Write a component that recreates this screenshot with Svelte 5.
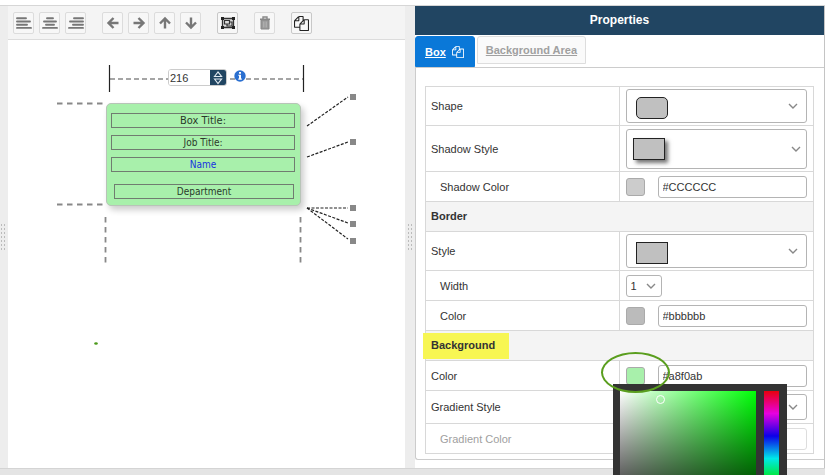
<script>
  const alignTools = [
    { label: 'Align left', d: 'M2 4.3h9M2 7.5h13M2 10.7h10M2 13.9h14' },
    { label: 'Align center', d: 'M6 4.3h6M3 7.5h12M5 10.7h8M2 13.9h14' },
    { label: 'Align right', d: 'M7 4.3h9M3 7.5h13M6 10.7h10M2 13.9h14' }
  ]

  const moveTools = [
    { label: 'Move left', turn: 0 },
    { label: 'Move right', turn: 180 },
    { label: 'Move up', turn: 90 },
    { label: 'Move down', turn: 270 }
  ]

  const fields = [
    { text: 'Box Title:', kind: 'title' },
    { text: 'Job Title:', kind: '' },
    { text: 'Name', kind: 'name' },
    { text: 'Department', kind: 'department' }
  ]

  // Connector lines from the box edge to their handles.
  const connectors = [
    { from: [299, 86], to: [340, 57], dot: 57 },
    { from: [299, 117], to: [340, 102], dot: 102 },
    { from: [299, 168], to: [340, 168], dot: 168 },
    { from: [299, 168], to: [340, 183], dot: 184 },
    { from: [299, 168], to: [340, 199], dot: 201 }
  ]

  let boxWidth = $state('216')
  let tab = $state('box')
  let shadowColor = $state('#CCCCCC')
  let borderColor = $state('#bbbbbb')
  let backgroundColor = $state('#a8f0ab')
  let gradientColor = $state('')
</script>

{#snippet copyIcon()}
  <path fill="currentColor" d="M1696 384q40 0 68 28t28 68v1216q0 40-28 68t-68 28h-960q-40 0-68-28t-28-68v-288h-544q-40 0-68-28t-28-68v-672q0-40 20-88t48-76l408-408q28-28 76-48t88-20h416q40 0 68 28t28 68v328q68-40 128-40h416zm-544 213l-299 299h299v-299zm-640-384l-299 299h299v-299zm196 647l316-316v-416h-384v416q0 40-28 68t-68 28h-416v640h512v-256q0-40 20-88t48-76zm956 804v-1152h-384v416q0 40-28 68t-68 28h-416v640h896z" />
{/snippet}

{#snippet chevron()}
  <svg class="chevron" viewBox="0 0 10 6" aria-hidden="true">
    <path d="M1 1 L5 5 L9 1" fill="none" stroke="#888" stroke-width="1.4" />
  </svg>
{/snippet}

{#snippet colorField(id, value, setValue, disabled)}
  <div class="color-field">
    {#if !disabled}
      <button class="swatch" style="background-color: {value}" aria-label="Pick color"></button>
    {:else}
      <button class="swatch" disabled aria-label="Pick color"></button>
    {/if}
    <input {id} type="text" {value} {disabled} oninput={(e) => setValue(e.target.value)} />
  </div>
{/snippet}

<div class="page">
  <main>
    <div class="splitter left"><span class="grip"></span></div>

    <section class="editor">
      <div class="toolbar">
        <div class="group">
          {#each alignTools as tool}
            <button aria-label={tool.label}>
              <svg viewBox="0 0 18 18"><path d={tool.d} stroke="#777" stroke-width="1.9" stroke-linecap="round" /></svg>
            </button>
          {/each}
        </div>
        <div class="group">
          {#each moveTools as tool}
            <button aria-label={tool.label}>
              <svg viewBox="0 0 18 18">
                <path d="M9.5 4 L4.5 9 L9.5 14 M5 9 H14.5" transform="rotate({tool.turn} 9 9)" fill="none" stroke="#777" stroke-width="2.4" />
              </svg>
            </button>
          {/each}
        </div>
        <button class="active" aria-label="Group">
          <svg viewBox="0 0 18 18">
            <path d="M3.5 4.5h11v9h-11z" fill="#ddd" stroke="#333" stroke-width="1.3" />
            <path d="M2 3h3v3h-3zM13 3h3v3h-3zM2 12h3v3h-3zM13 12h3v3h-3z" fill="#222" />
            <path d="M5.5 6.5h5v3.5h-5zM8 10v2h5v-4h-2.5" fill="none" stroke="#333" stroke-width="1.2" />
          </svg>
        </button>
        <button class="dim" aria-label="Delete">
          <svg viewBox="0 0 18 18">
            <path d="M7 4.5V3h4v1.5M4 5.2h10" fill="none" stroke="#888" stroke-width="1.4" />
            <path d="M5 6h8v9h-8z" fill="#999" stroke="#888" stroke-width="1" />
            <path d="M7.5 7.5v6M9 7.5v6M10.5 7.5v6" stroke="#bbb" stroke-width=".6" />
          </svg>
        </button>
        <button class="active copy" aria-label="Copy style">
          <svg viewBox="0 0 1792 1792">{@render copyIcon()}</svg>
        </button>
      </div>

      <div class="canvas">
        <svg class="guides" width="397" height="320" aria-hidden="true">
          <g stroke="#888" stroke-width="1.5" fill="none">
            <path d="M102 39H295" stroke-dasharray="5 3" />
            <path d="M49 63.5H95M49 164.5H95M97.5 177V223M292.5 177V223" stroke-dasharray="5.5 4.5" stroke-width="1.8" />
          </g>
          <path d="M101.5 25V52M295.5 25V52" stroke="#222" stroke-width="1.2" />
          {#each connectors as line}
            <path d="M{line.from[0]} {line.from[1]}L{line.to[0]} {line.to[1]}" stroke="#222" stroke-width="1.2" stroke-dasharray="3 1.5" />
            <rect x="342" y={line.dot - 3} width="6" height="6" fill="#888" />
          {/each}
          <ellipse cx="88" cy="303.5" rx="1.8" ry="1.2" fill="#4c9a1c" />
        </svg>

        <div class="width-input">
          <input type="text" aria-label="Box width" bind:value={boxWidth} />
          <button aria-label="Change width">
            <svg viewBox="0 0 16 15">
              <path d="M4.5 6.5 L8 2 L11.5 6.500zM4.500 9 L8 13.500 L11.500 9z" fill="none" stroke="#dfe8ef" stroke-width="1.2" />
            </svg>
          </button>
        </div>
        <svg class="info" viewBox="0 0 12 12" aria-hidden="true">
          <circle cx="6" cy="6" r="5.7" fill="#2a6fd0" />
          <path d="M5 2h2v1.7h-2zM4.3 4.7H7V8.5h.8V9.7H4.3V8.5H5V5.8h-.7z" fill="#fff" />
        </svg>

        <div class="chart-box">
          {#each fields as field}
            <div class="field {field.kind}">{field.text}</div>
          {/each}
        </div>
      </div>
    </section>

    <div class="splitter"><span class="grip"></span></div>

    <aside class="properties">
      <h2>Properties</h2>
      <nav class="tabs">
        <a href="#box" class:selected={tab === 'box'} onclick={() => (tab = 'box')}>
          <span>Box</span>
          <svg viewBox="0 0 1792 1792" aria-hidden="true">{@render copyIcon()}</svg>
        </a>
        <a href="#area" class:selected={tab === 'area'} onclick={() => (tab = 'area')}><span>Background Area</span></a>
      </nav>

      <div class="panel">
        <form class="rows">
          <div class="row tall">
            <label for="shape">Shape</label>
            <div class="cell">
              <div class="select">
                <select id="shape"><option value="rounded" aria-label="Rounded"></option></select>
                <span class="preview rounded"></span>
                {@render chevron()}
              </div>
            </div>
          </div>
          <div class="row taller">
            <label for="shadow">Shadow Style</label>
            <div class="cell">
              <div class="select shadow">
                <select id="shadow"><option value="soft" aria-label="Soft"></option></select>
                <span class="preview shadowed"></span>
                {@render chevron()}
              </div>
            </div>
          </div>
          <div class="row">
            <label class="sub" for="shadow-color">Shadow Color</label>
            <div class="cell">{@render colorField('shadow-color', shadowColor, (v) => (shadowColor = v), false)}</div>
          </div>

          <h3>Border</h3>
          <div class="row tall">
            <label for="style">Style</label>
            <div class="cell">
              <div class="select">
                <select id="style"><option value="solid" aria-label="Solid"></option></select>
                <span class="preview"></span>
                {@render chevron()}
              </div>
            </div>
          </div>
          <div class="row">
            <label class="sub" for="width">Width</label>
            <div class="cell">
              <div class="select small">
                <select id="width"><option>1</option><option>2</option><option>3</option></select>
                {@render chevron()}
              </div>
            </div>
          </div>
          <div class="row">
            <label class="sub" for="border-color">Color</label>
            <div class="cell">{@render colorField('border-color', borderColor, (v) => (borderColor = v), false)}</div>
          </div>

          <h3><mark>Background</mark></h3>
          <div class="row">
            <label for="background-color">Color</label>
            <div class="cell">
              {@render colorField('background-color', backgroundColor, (v) => (backgroundColor = v), false)}
              <div class="picker">
                <div class="shades"><span class="cursor"></span></div>
                <div class="hues"></div>
              </div>
              <span class="callout"></span>
            </div>
          </div>
          <div class="row gradient">
            <label for="gradient">Gradient Style</label>
            <div class="cell">
              <div class="select medium">
                <select id="gradient"><option value="none" aria-label="None"></option></select>
                {@render chevron()}
              </div>
            </div>
          </div>
          <div class="row disabled">
            <label class="sub" for="gradient-color">Gradient Color</label>
            <div class="cell">{@render colorField('gradient-color', gradientColor, (v) => (gradientColor = v), true)}</div>
          </div>
        </form>
      </div>
    </aside>
  </main>
  <footer></footer>
</div>

<style>
  :global(body) {
    margin: 0;
    background: #fff;
  }
  .page {
    display: flex;
    flex-direction: column;
    box-sizing: border-box;
    min-height: 100vh;
    padding-top: 5px;
    overflow: hidden;
    font-family: "Liberation Sans", Arial, sans-serif;
    font-size: 11px;
    color: #333;
  }
  .page * {
    box-sizing: border-box;
  }
  button, input, select {
    margin: 0;
    padding: 0;
    font: inherit;
    color: inherit;
  }
  main {
    flex: 1;
    display: grid;
    grid-template-columns: 8px minmax(0, 397fr) 10px minmax(0, 410fr);
    border-top: 1px solid #d6d6d6;
  }
  footer {
    height: 7px;
    border-top: 1px solid #d4d4d4;
    background: #e4e4e4;
  }

  .splitter {
    display: flex;
    align-items: center;
    justify-content: center;
    background: #ededed;
  }
  .splitter.left {
    justify-content: flex-start;
  }
  .grip {
    width: 6px;
    height: 28px;
    background: radial-gradient(circle, #bbb 1px, transparent 1px) 0 0 / 3px 4px;
  }

  .editor {
    display: flex;
    flex-direction: column;
  }
  .toolbar {
    display: flex;
    gap: 16px;
    padding: 6px 5px 5px;
    border-bottom: 1px solid #dcdcdc;
    background: #f4f4f4;
  }
  .group {
    display: flex;
    gap: 5px;
  }
  .toolbar button {
    display: flex;
    align-items: center;
    justify-content: center;
    width: 21px;
    height: 22px;
    border: 1px solid #dcdcdc;
    border-radius: 2px;
    background: #f7f7f7;
  }
  .toolbar button.active {
    border-color: #c8c8c8;
    color: #222;
  }
  .toolbar svg {
    flex: none;
    width: 18px;
    height: 18px;
  }
  .toolbar .copy svg {
    width: 15px;
    height: 15px;
  }

  .canvas {
    position: relative;
    flex: 1;
  }
  .guides {
    display: block;
  }
  .width-input {
    position: absolute;
    left: 160px;
    top: 29px;
    display: flex;
    width: 59px;
    height: 17px;
    border: 1px solid #ccc;
    border-radius: 3px;
    background: #fff;
    overflow: hidden;
  }
  .width-input input {
    flex: 1;
    min-width: 0;
    padding-left: 1px;
    border: 0;
  }
  .width-input button {
    display: flex;
    width: 16px;
    border: 0;
    background: #214562;
  }
  .width-input svg {
    width: 16px;
    height: 15px;
  }
  .info {
    position: absolute;
    left: 226px;
    top: 30px;
    width: 12px;
    height: 12px;
  }
  .chart-box {
    position: absolute;
    left: 98px;
    top: 63px;
    display: flex;
    flex-direction: column;
    gap: 7px;
    width: 195px;
    height: 103px;
    padding: 9px 5px 0 4px;
    border: 1px solid #b8c4b8;
    border-radius: 5px;
    background: #a8f0ab;
    box-shadow: 3px 4px 6px rgba(0, 0, 0, 0.2);
    font-family: "DejaVu Sans Condensed", "DejaVu Sans", sans-serif;
    font-size: 10px;
    color: #2a3a2a;
  }
  .field {
    height: 15px;
    border: 1px solid #707c70;
    line-height: 14px;
    text-align: center;
  }
  .field.title {
    font-size: 11px;
  }
  .field.name {
    color: #1432e0;
  }
  .field.department {
    margin: 5px 1px 0 3px;
  }

  .properties {
    display: flex;
    flex-direction: column;
    padding-bottom: 8px;
    border-right: 1px solid #c4c4c4;
  }
  h2 {
    margin: 0;
    background: #214562;
    color: #fff;
    font-size: 12px;
    line-height: 29px;
    text-align: center;
  }
  .tabs {
    display: flex;
    align-items: flex-start;
    gap: 2px;
    padding-top: 1px;
  }
  .tabs a {
    display: flex;
    align-items: center;
    gap: 6px;
    height: 28px;
    padding: 0 8px;
    border: 1px solid #ddd;
    border-radius: 3px 3px 0 0;
    background: #fafafa;
    color: #a0a0a0;
    font-weight: bold;
    text-decoration: none;
  }
  .tabs span {
    text-decoration: underline;
  }
  .tabs a.selected {
    height: 31px;
    padding: 0 10px 0 9px;
    border-color: #0a78d8;
    background: #0a78d8;
    color: #fff;
  }
  .tabs svg {
    width: 12px;
    height: 12px;
  }

  .panel {
    padding: 18px 10px 5px 9px;
    border: 1px solid #ccc;
    border-right: 0;
    border-radius: 0 0 0 3px;
  }
  .rows {
    border: 1px solid #d8d8d8;
    border-bottom: 0;
  }
  .row {
    display: grid;
    grid-template-columns: calc(50% - 1px) minmax(0, 1fr);
    height: 30px;
    border-bottom: 1px solid #d8d8d8;
  }
  .row.tall {
    height: 39px;
  }
  .row.taller {
    height: 46px;
  }
  .row.gradient {
    height: 33px;
  }
  .row.disabled {
    color: #a0a0a0;
  }
  label {
    display: flex;
    align-items: center;
    padding-left: 5px;
  }
  label.sub {
    padding-left: 14px;
  }
  .cell {
    position: relative;
    display: flex;
    align-items: center;
    min-width: 0;
    padding: 0 6px;
    border-left: 1px solid #d8d8d8;
  }
  h3 {
    margin: 0;
    height: 30px;
    padding-left: 5px;
    border-bottom: 1px solid #d8d8d8;
    background: #f4f4f4;
    font-size: 11px;
    line-height: 29px;
  }
  mark {
    display: inline-block;
    height: 26px;
    margin: 2px 0 0 -8px;
    padding: 0 14px 0 8px;
    background: #f7f653;
    color: inherit;
    line-height: 25px;
    vertical-align: top;
  }

  /* The preview and the chevron share the select's grid cell. */
  .select {
    display: grid;
    align-items: center;
    width: 100%;
    height: 34px;
  }
  .select > :global(*) {
    grid-area: 1 / 1;
  }
  select {
    width: 100%;
    height: 100%;
    padding-left: 4px;
    border: 1px solid #b4b4b4;
    border-radius: 3px;
    background: #fff;
    appearance: none;
  }
  .chevron {
    width: 10px;
    height: 6px;
    margin-right: 9px;
    justify-self: end;
    pointer-events: none;
  }
  .select.shadow {
    height: 40px;
  }
  .shadow .chevron {
    margin-right: 6px;
  }
  .select.small {
    width: 36px;
    height: 22px;
  }
  .small .chevron {
    margin-right: 6px;
  }
  .select.medium {
    height: 26px;
  }
  .preview {
    width: 32px;
    height: 22px;
    margin: 3px 0 0 10px;
    border: 1px solid #222;
    background: #c0c0c0;
    pointer-events: none;
  }
  .preview.rounded {
    border-radius: 5px;
  }
  .preview.shadowed {
    margin: 0 0 0 7px;
    box-shadow: 3px 3px 4px rgba(0, 0, 0, 0.55);
  }

  .color-field {
    display: flex;
    align-items: center;
    gap: 13px;
    width: 100%;
  }
  .swatch {
    flex: none;
    width: 19px;
    height: 18px;
    border: 1px solid #aaa;
    border-radius: 3px;
    background: #fff;
  }
  .color-field input {
    flex: 1;
    min-width: 0;
    height: 22px;
    padding-left: 4px;
    border: 1px solid #b4b4b4;
    border-radius: 3px;
    background: #fff;
  }
  .color-field input:disabled {
    border-color: #ddd;
  }

  .picker {
    position: absolute;
    left: -7px;
    top: 23px;
    z-index: 1;
    display: flex;
    gap: 8px;
    width: 174px;
    height: 149px;
    padding: 7px 8px 7px 7px;
    background: #333;
  }
  .shades {
    position: relative;
    flex: 1;
    background: linear-gradient(to top, #000, transparent), linear-gradient(to right, #fff, #00ff08);
  }
  .cursor {
    position: absolute;
    left: 36px;
    top: 4px;
    width: 9px;
    height: 9px;
    border: 1px solid #fff;
    border-radius: 50%;
  }
  .hues {
    width: 15px;
    background: linear-gradient(#e8000c, #e800e0, #0c00e8, #00e8e8, #00e80c, #e8e800, #e8000c);
  }
  .callout {
    position: absolute;
    left: -19px;
    top: -9px;
    z-index: 2;
    width: 69px;
    height: 41px;
    border: 2px solid #5a9e1e;
    border-radius: 50%;
    pointer-events: none;
  }
</style>
